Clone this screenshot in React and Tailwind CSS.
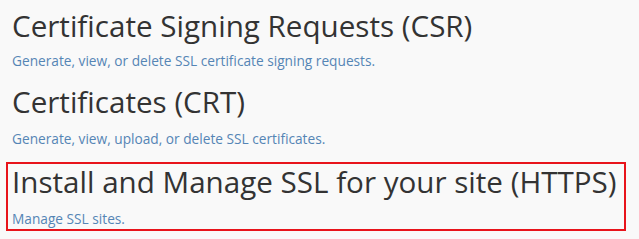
export default function App() {
  const sections = [
    {
      title: "Certificate Signing Requests (CSR)",
      desc: "Generate, view, or delete SSL certificate signing requests.",
      gap: "mt-[6px]",
      subGap: "mt-[5px]",
    },
    {
      title: "Certificates (CRT)",
      desc: "Generate, view, upload, or delete SSL certificates.",
      gap: "mt-[11px]",
      subGap: "mt-[7px]",
    },
  ];

  return (
    <div
      className="h-[239px] w-full overflow-hidden bg-[#f9f9f9] pl-[6px] pr-[13px]"
      style={{ fontFamily: '"Open Sans", sans-serif' }}
    >
      {sections.map((s) => (
        <div key={s.title} className={`px-[6px] ${s.gap}`}>
          <h2 className="text-[29.6px] font-normal leading-[40px] text-[#333]">
            {s.title}
          </h2>
          <a
            className={`block text-[13.7px] leading-[20px] text-[#5585b5] ${s.subGap}`}
          >
            {s.desc}
          </a>
        </div>
      ))}
      <div className="mt-[13px] border-2 border-[#e8141b] pl-[4px] pb-0 pt-[1px]">
        <h2 className="text-[29.6px] font-normal leading-[34px] text-[#333]">
          Install and Manage SSL for your site (HTTPS)
        </h2>
        <a className="mt-[10px] block text-[13.7px] leading-[20px] text-[#5585b5]">
          Manage SSL sites.
        </a>
      </div>
    </div>
  );
}
